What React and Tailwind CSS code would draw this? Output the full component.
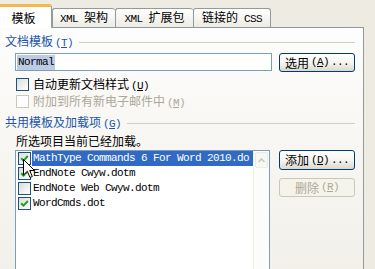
import React from 'react';

const lat = "font-['Liberation_Mono',monospace] text-[11px] tracking-[-0.6px]";

const Key = ({ k }) => (
  <span className={`${lat} ml-[2px]`}>
    (<span className="underline">{k}</span>)
  </span>
);

const Check = ({ checked, disabled }) => (
  <span
    className={`flex h-[13px] w-[13px] shrink-0 items-center justify-center border ${
      disabled
        ? 'border-[#cac8bb] bg-white'
        : 'border-[#1c5180] bg-linear-to-br from-[#dcdcd7] to-white'
    }`}
  >
    {checked && (
      <svg width="9" height="9" viewBox="0 0 9 9">
        <path d="M1.2 4.2 L3.5 6.6 L7.8 2" fill="none" stroke="#21a121" strokeWidth="2" />
      </svg>
    )}
  </span>
);

const Btn = ({ children, disabled, h }) => (
  <div
    className={`flex w-[76px] items-center justify-center rounded-[3px] border ${h} ${
      disabled
        ? 'border-[#c9c7ba] bg-[#f5f4ea] text-[#aca899]'
        : 'border-[#003c74] bg-linear-to-b from-white via-[#f6f5f1] to-[#dcd8cc] text-black'
    }`}
  >
    {children}
  </div>
);

const GroupHeader = ({ label, k }) => (
  <div className="flex h-[16px] items-center">
    <span className="whitespace-nowrap text-[#2154a8]">
      {label}
      <Key k={k} />
    </span>
    <div className="ml-[6px] h-px flex-1 bg-[#d0d0bf]" />
  </div>
);

// first entry is shown clipped by the scrollbar in the dialog
const items = [
  { name: 'MathType Commands 6 For Word 2010.do', checked: true, selected: true },
  { name: 'EndNote Cwyw.dotm', checked: true },
  { name: 'EndNote Web Cwyw.dotm', checked: false },
  { name: 'WordCmds.dot', checked: true },
];

const Tab = ({ children, w, last }) => (
  <div
    className={`flex h-[19px] items-center justify-center whitespace-nowrap rounded-t-[3px] border-l border-t border-[#919b9c] bg-linear-to-b from-white to-[#ecebe5] ${w} ${
      last ? 'border-r' : ''
    }`}
  >
    <span>{children}</span>
  </div>
);

export default function App() {
  return (
    <div className="relative flex h-[269px] w-[375px] flex-col overflow-hidden bg-[#eeebe2] font-['Noto_Sans_CJK_SC',sans-serif] text-[12px] leading-none text-black">
      {/* tabs */}
      <div className="flex h-[27px] shrink-0 items-end">
        <div className="relative z-10 -mb-px flex h-[24px] w-[52px] items-center justify-center rounded-tr-[3px] border-r border-t-[3px] border-r-[#919b9c] border-t-[#f4b94a] bg-white pr-[4px]">
          模板
        </div>
        <Tab w="w-[63px]">
          <span className={lat}>XML{'\u00a0'}</span>架构
        </Tab>
        <Tab w="w-[78px]">
          <span className={lat}>XML{'\u00a0'}</span>扩展包
        </Tab>
        <Tab w="w-[78px]" last>
          链接的<span className={lat}>{'\u00a0'}CSS</span>
        </Tab>
      </div>

      {/* panel */}
      <div className="flex h-[260px] w-[364px] shrink-0 flex-col border-r border-t border-[#919b9c] bg-linear-to-b from-[#fdfdfd] via-[#f8f7f3] via-40% to-[#f1efe8] pl-[5px] pr-[8px] pt-[6px]">
        <GroupHeader label="文档模板" k="T" />

        <div className="ml-[10px] mt-[3px] flex items-start">
          <div className="flex h-[18px] w-[257px] items-center border border-[#7f9db9] bg-white pl-[1px]">
            <span className={`${lat} bg-[#bccbe6] px-px py-[2px] text-black`}>Normal</span>
          </div>
          <div className="ml-[7px]">
            <Btn h="h-[19px]">
              选用<Key k="A" />
              <span className={`${lat} ml-[2px]`}>...</span>
            </Btn>
          </div>
        </div>

        <div className="ml-[11px] mt-[5px] flex h-[15px] items-center">
          <Check />
          <span className="ml-[4px]">
            自动更新文档样式<Key k="U" />
          </span>
        </div>
        <div className="ml-[11px] mt-[2px] flex h-[15px] items-center text-[#aca899]">
          <Check disabled />
          <span className="ml-[4px]">
            附加到所有新电子邮件中
            <span className={`${lat} ml-[2px] text-[9px] tracking-[-0.3px]`}>
              (<span className="underline">M</span>)
            </span>
          </span>
        </div>

        <div className="mt-[6px]">
          <GroupHeader label="共用模板及加载项" k="G" />
        </div>
        <div className="ml-[11px] mt-[2px] flex h-[15px] items-center">所选项目当前已经加载。</div>

        <div className="ml-[10px] mt-[2px] flex items-start">
          {/* list box */}
          <div className="flex h-[125px] w-[255px] border border-[#7f9db9] bg-white">
            <div className="flex min-w-0 flex-1 flex-col">
              {items.map((it) => (
                <div key={it.name} className="flex h-[15px] items-center pl-[2px]">
                  <Check checked={it.checked} />
                  <div
                    className={`ml-[1px] flex h-full min-w-0 flex-1 items-center overflow-hidden whitespace-nowrap pl-px ${
                      it.selected ? 'bg-[#316ac5] text-white' : ''
                    }`}
                  >
                    <span className={lat}>{it.name}</span>
                  </div>
                </div>
              ))}
            </div>
            {/* scrollbar */}
            <div className="flex w-[16px] shrink-0 flex-col items-center border-l border-[#f0f0ea] bg-[#fcfcfa] pt-px">
              <div className="flex h-[16px] w-[13px] items-center justify-center rounded-[2px] border border-[#ebebe4] bg-[#f7f7f3]">
                <svg width="7" height="5" viewBox="0 0 7 5">
                  <path d="M0.5 4 L3.5 1 L6.5 4" fill="none" stroke="#c8c8c0" strokeWidth="1.5" />
                </svg>
              </div>
            </div>
          </div>

          <div className="ml-[9px] flex flex-col gap-[8px]">
            <Btn h="h-[20px]">
              添加<Key k="D" />
              <span className={`${lat} ml-[2px]`}>...</span>
            </Btn>
            <Btn h="h-[19px]" disabled>
              删除<Key k="R" />
            </Btn>
          </div>
        </div>
      </div>

      {/* mouse pointer */}
      <svg className="absolute left-[23px] top-[159px] z-20" width="13" height="20" viewBox="0 0 13 20">
        <path
          d="M0.5 0.5 L0.5 16 L4.3 12.3 L7 18.5 L9.3 17.5 L6.7 11.5 L11.5 11.5 Z"
          fill="white"
          stroke="black"
          strokeWidth="1"
          strokeLinejoin="miter"
        />
      </svg>
    </div>
  );
}
